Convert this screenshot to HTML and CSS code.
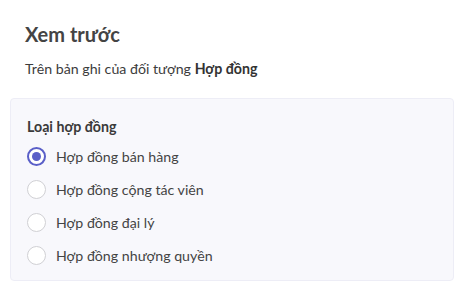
FILE: index.html
```html
<!DOCTYPE html>
<html lang="vi">
<head>
<meta charset="utf-8">
<link rel="stylesheet" href="styles.css">
</head>
<body>
<div class="preview">
  <h2 class="title">Xem trước</h2>
  <p class="subtitle">Trên bản ghi của đối tượng <b>Hợp đồng</b></p>
  <div class="panel">
    <div class="label">Loại hợp đồng</div>
    <div class="options">
      <label class="option"><span class="radio checked"></span><span>Hợp đồng bán hàng</span></label>
      <label class="option"><span class="radio"></span><span>Hợp đồng cộng tác viên</span></label>
      <label class="option"><span class="radio"></span><span>Hợp đồng đại lý</span></label>
      <label class="option"><span class="radio"></span><span>Hợp đồng nhượng quyền</span></label>
    </div>
  </div>
</div>
</body>
</html>
```
FILE: styles.css
```css
html, body {
  margin: 0;
  padding: 0;
  background: #ffffff;
}
body {
  font-family: Lato, "Noto Sans", sans-serif;
  color: #3c3c3c;
}
.preview {
  padding: 22px 10px 0 10px;
}
.title {
  margin: 0 0 0 15px;
  font-size: 20px;
  line-height: 24px;
  font-weight: 700;
  color: #444444;
}
.subtitle {
  margin: 14px 0 0 15px;
  font-size: 14.2px;
  line-height: 18px;
  color: #3c3c3c;
}
.subtitle b {
  font-weight: 700;
  color: #333;
}
.panel {
  margin-top: 20px;
  width: 442px;
  height: 181px;
  box-sizing: content-box;
  background: #f8f8fc;
  border: 1px solid #ededf6;
  border-radius: 4px;
  padding: 0;
}
.label {
  margin: 19px 0 0 16px;
  font-size: 14.2px;
  line-height: 18px;
  font-weight: 700;
  color: #3a3a3a;
}
.options {
  display: flex;
  flex-direction: column;
  gap: 14px;
  margin: 11px 0 0 16px;
}
.option {
  display: flex;
  align-items: center;
  gap: 10px;
  height: 19px;
  font-size: 14.2px;
  color: #444444;
}
.radio {
  width: 19px;
  height: 19px;
  box-sizing: border-box;
  border-radius: 50%;
  border: 1.5px solid #d0d0d4;
  background: #ffffff;
  position: relative;
}
.radio.checked {
  border: 2px solid #5a5fc8;
}
.radio.checked::after {
  content: "";
  position: absolute;
  left: 3px;
  top: 3px;
  width: 9px;
  height: 9px;
  border-radius: 50%;
  background: #5a5fc8;
}
```
